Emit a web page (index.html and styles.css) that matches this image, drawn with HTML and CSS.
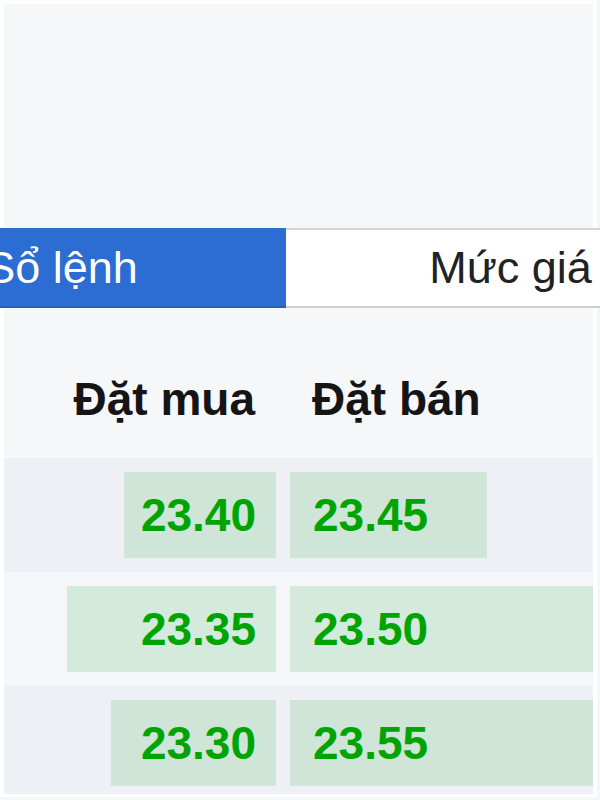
FILE: index.html
```html
<!DOCTYPE html>
<html lang="vi">
<head>
    <meta charset="UTF-8">
    <meta name="viewport" content="width=device-width, initial-scale=1.0">
    <title>Sổ lệnh</title>
    <link rel="stylesheet" href="styles.css">
</head>
<body>
    <div class="panel">
        <!-- Vùng biểu đồ (trống) -->
        <div class="chart-area"></div>

        <!-- Tab chọn -->
        <div class="tabs">
            <div class="tab active">Sổ lệnh</div>
            <div class="tab">Mức giá</div>
        </div>

        <!-- Sổ lệnh -->
        <div class="book">
            <div class="book-head">
                <div class="head-cell buy">Đặt mua</div>
                <div class="head-cell sell">Đặt bán</div>
            </div>

            <div class="book-row">
                <div class="cell buy"><div class="bar" style="width: 55.9%">23.40</div></div>
                <div class="cell sell"><div class="bar" style="width: 65%">23.45</div></div>
            </div>
            <div class="book-row">
                <div class="cell buy"><div class="bar" style="width: 76.8%">23.35</div></div>
                <div class="cell sell"><div class="bar" style="width: 100%">23.50</div></div>
            </div>
            <div class="book-row">
                <div class="cell buy"><div class="bar" style="width: 60.7%">23.30</div></div>
                <div class="cell sell"><div class="bar" style="width: 100%">23.55</div></div>
            </div>
        </div>
    </div>
</body>
</html>
```

FILE: styles.css
```css
/* Trang */
body {
    margin: 0;
    background-color: #f5f6f8;
    font-family: "Liberation Sans", Arial, sans-serif;
    overflow: hidden;
}

.panel {
    width: 589px;
    height: 790px;
    border: 4px solid #fff;
    border-bottom-width: 3px;
    background-color: #f6f7f9;
    overflow-x: visible;
    overflow-y: clip;
}

.chart-area {
    height: 224px;
}

/* Tab */
.tabs {
    display: flex;
    margin-left: -167px;
    height: 80px;
    width: 898px;
}

.tab {
    flex: 0 0 449px;
    display: flex;
    align-items: center;
    justify-content: center;
    font-size: 45px;
    color: #222;
    background-color: #fff;
    box-sizing: border-box;
    border-top: 2px solid #d6d6d6;
    border-bottom: 2px solid #cfcfcf;
}

.tab.active {
    background-color: #2b6dd2;
    color: #fff;
    border-top-color: #2b6dd2;
    border-bottom-color: #2460bd;
}

/* Sổ lệnh */
.book-head,
.book-row {
    display: grid;
    grid-template-columns: 272px 303px;
    column-gap: 14px;
}

.book-head {
    height: 150px;
    box-sizing: border-box;
    padding-top: 32px;
    align-items: center;
}

.head-cell {
    font-size: 46px;
    font-weight: bold;
    color: #151515;
}

.head-cell.buy {
    text-align: right;
    padding-right: 21px;
}

.head-cell.sell {
    padding-left: 22px;
}

.book-row {
    height: 114px;
    box-sizing: border-box;
    padding: 14px 0;
    background-color: #eef0f5;
}

.book-row:nth-child(odd) {
    background-color: #f5f6f9;
}

.cell {
    display: flex;
}

.cell.buy {
    justify-content: flex-end;
}

.bar {
    height: 86px;
    line-height: 86px;
    box-sizing: border-box;
    background-color: rgba(30, 165, 55, 0.15);
    color: #00a400;
    font-size: 46px;
    font-weight: bold;
    white-space: nowrap;
}

.cell.buy .bar {
    text-align: right;
    padding-right: 20px;
}

.cell.sell .bar {
    padding-left: 23px;
}
```
